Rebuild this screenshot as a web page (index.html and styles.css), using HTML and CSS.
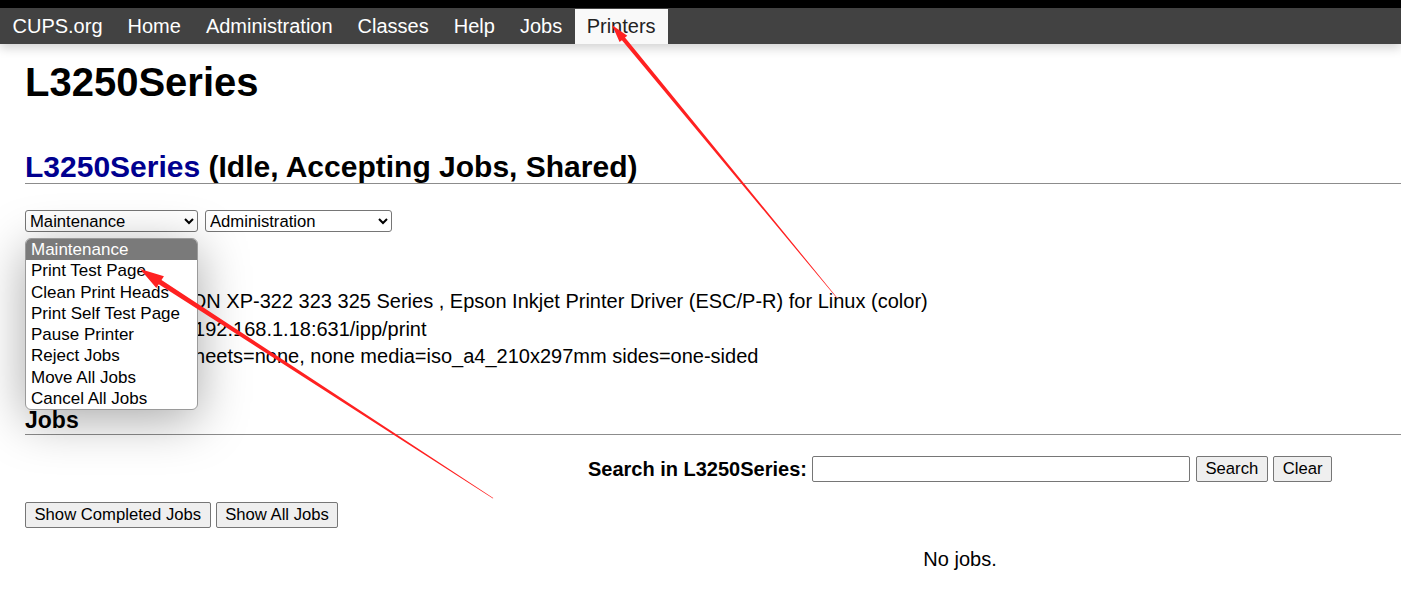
FILE: index.html
```html
<!DOCTYPE html>
<html lang="en">
<head>
<meta charset="utf-8">
<title>L3250Series - CUPS</title>
<link rel="stylesheet" href="styles.css">
</head>
<body>
<div class="topstrip"></div>
<nav class="header">
  <ul class="nav">
    <li><a href="#">CUPS.org</a></li>
    <li><a href="#">Home</a></li>
    <li><a href="#">Administration</a></li>
    <li><a href="#">Classes</a></li>
    <li><a href="#">Help</a></li>
    <li><a href="#">Jobs</a></li>
    <li class="active"><a href="#">Printers</a></li>
  </ul>
</nav>
<main class="page">
  <h1 class="pagetitle">L3250Series</h1>
  <h2 class="title"><a href="#">L3250Series</a> (Idle, Accepting Jobs, Shared)</h2>
  <form class="ops">
    <select class="sel sel-maint">
      <option>Maintenance</option>
    </select>
    <select class="sel sel-admin">
      <option>Administration</option>
    </select>
    <div class="menu">
      <div class="menu-item selected">Maintenance</div>
      <div class="menu-item">Print Test Page</div>
      <div class="menu-item">Clean Print Heads</div>
      <div class="menu-item">Print Self Test Page</div>
      <div class="menu-item">Pause Printer</div>
      <div class="menu-item">Reject Jobs</div>
      <div class="menu-item">Move All Jobs</div>
      <div class="menu-item">Cancel All Jobs</div>
    </div>
  </form>
  <table class="info">
    <tr><th>Description:</th><td></td></tr>
    <tr><th>Location:</th><td></td></tr>
    <tr><th>Driver:</th><td>EPSON XP-322 323 325 Series , Epson Inkjet Printer Driver (ESC/P-R) for Linux (color)</td></tr>
    <tr><th>Connection:</th><td>ipp://192.168.1.18:631/ipp/print</td></tr>
    <tr><th>Defaults:</th><td>job-sheets=none, none media=iso_a4_210x297mm sides=one-sided</td></tr>
  </table>
  <h3 class="title jobs-title">Jobs</h3>
  <form class="search">
    <b class="search-label">Search in L3250Series:</b>
    <input class="search-input" type="text">
    <button type="button" class="btn btn-search">Search</button>
    <button type="button" class="btn btn-clear">Clear</button>
  </form>
  <div class="showjobs">
    <button type="button" class="btn">Show Completed Jobs</button>
    <button type="button" class="btn">Show All Jobs</button>
  </div>
  <p class="nojobs">No jobs.</p>
</main>
<svg class="annot" width="1401" height="604" viewBox="0 0 1401 604">
  <g transform="translate(612 25) rotate(50.5)">
    <polygon fill="#ff2121" points="0,0 18,-5 18,-2 354,-0.3 354,0.3 18,2 18,5"/>
  </g>
  <g transform="translate(140 269) rotate(33)">
    <polygon fill="#ff2121" points="0,0 24,-7 24,-2.5 421,-0.3 421,0.3 24,2.5 24,7"/>
  </g>
</svg>
</body>
</html>
```
FILE: styles.css
```css
html, body {
  margin: 0;
  padding: 0;
  overflow: hidden;
  background: #fff;
}
body {
  font-family: "Liberation Sans", Arial, sans-serif;
  font-size: 20px;
  color: #000;
  position: relative;
  width: 1401px;
  height: 604px;
}
.topstrip {
  height: 8px;
  background: #000;
}
.header {
  background: #424242;
  height: 36px;
  box-shadow: 0 4px 10px rgba(0, 0, 0, 0.18);
  position: relative;
  z-index: 1;
}
.nav {
  list-style: none;
  margin: 0;
  padding: 0;
  display: flex;
  height: 36px;
}
.nav li {
  display: flex;
}
.nav a {
  display: block;
  color: #fff;
  text-decoration: none;
  padding: 0 12.5px;
  line-height: 36px;
  font-size: 20px;
}
.nav li.active a {
  background: #f9f9f9;
  color: #222;
  margin-top: 1px;
  line-height: 35px;
  padding: 0 12px;
}
.page {
  width: 1870px;
  margin-left: 25px;
}
.pagetitle {
  font-size: 40px;
  line-height: 46px;
  font-weight: bold;
  margin: 15px 0 0;
}
.title {
  border-bottom: 1px solid #8c8c8c;
  margin: 0;
}
h2.title {
  font-size: 30px;
  line-height: 33px;
  margin-top: 45px;
}
h2.title a {
  color: #00008f;
  text-decoration: none;
}
.ops {
  margin-top: 26px;
  position: relative;
  display: flex;
  gap: 7px;
  height: 22px;
}
.sel {
  font-family: "Liberation Sans", Arial, sans-serif;
  font-size: 16.67px;
  height: 22px;
  border: 1px solid #767676;
  border-radius: 3px;
  background: #fff;
  color: #000;
  padding: 0;
  margin: 0;
}
.sel-maint { width: 173px; }
.sel-admin { width: 187px; }
.menu {
  position: absolute;
  left: 0;
  top: 28px;
  width: 171px;
  border: 1px solid #9a9a9a;
  border-radius: 6px;
  background: #fff;
  overflow: hidden;
  box-shadow: 0 10px 50px rgba(0, 0, 0, 0.34);
  z-index: 5;
}
.menu-item {
  font-size: 17px;
  line-height: 21.25px;
  padding-left: 5px;
  color: #000;
  white-space: nowrap;
}
.menu-item.selected {
  background: #7a7a7a;
  color: #fff;
}
.info {
  border-collapse: separate;
  border-spacing: 2px;
  margin-top: 0;
}
.info th {
  text-align: right;
  vertical-align: top;
  font-weight: bold;
  padding: 1.25px;
  line-height: 23px;
  width: 118px;
}
.info td {
  padding: 1.25px;
  line-height: 23px;
  white-space: nowrap;
}
h3.title {
  font-size: 23px;
  line-height: 27px;
  margin-top: 35px;
}
.search {
  display: flex;
  justify-content: center;
  align-items: center;
  gap: 5.5px;
  margin-top: 21.5px;
  height: 26px;
}
.search-label {
  font-size: 20px;
  font-weight: bold;
}
.search-input {
  width: 378px;
  height: 26px;
  box-sizing: border-box;
  border: 1px solid #767676;
  border-radius: 2px;
  margin: 0;
  padding: 0 2px;
  font-size: 16.67px;
}
.btn {
  font-family: "Liberation Sans", Arial, sans-serif;
  font-size: 16.67px;
  height: 26px;
  padding: 0 8.5px;
  border: 1px solid #767676;
  border-radius: 2px;
  background: #efefef;
  color: #000;
  margin: 0;
}
.showjobs {
  display: flex;
  gap: 5px;
  margin-top: 20px;
}
.nojobs {
  text-align: center;
  margin: 19.5px 0 0;
  line-height: 23px;
}
.annot {
  position: absolute;
  left: 0;
  top: 0;
  pointer-events: none;
  z-index: 10;
}
```
